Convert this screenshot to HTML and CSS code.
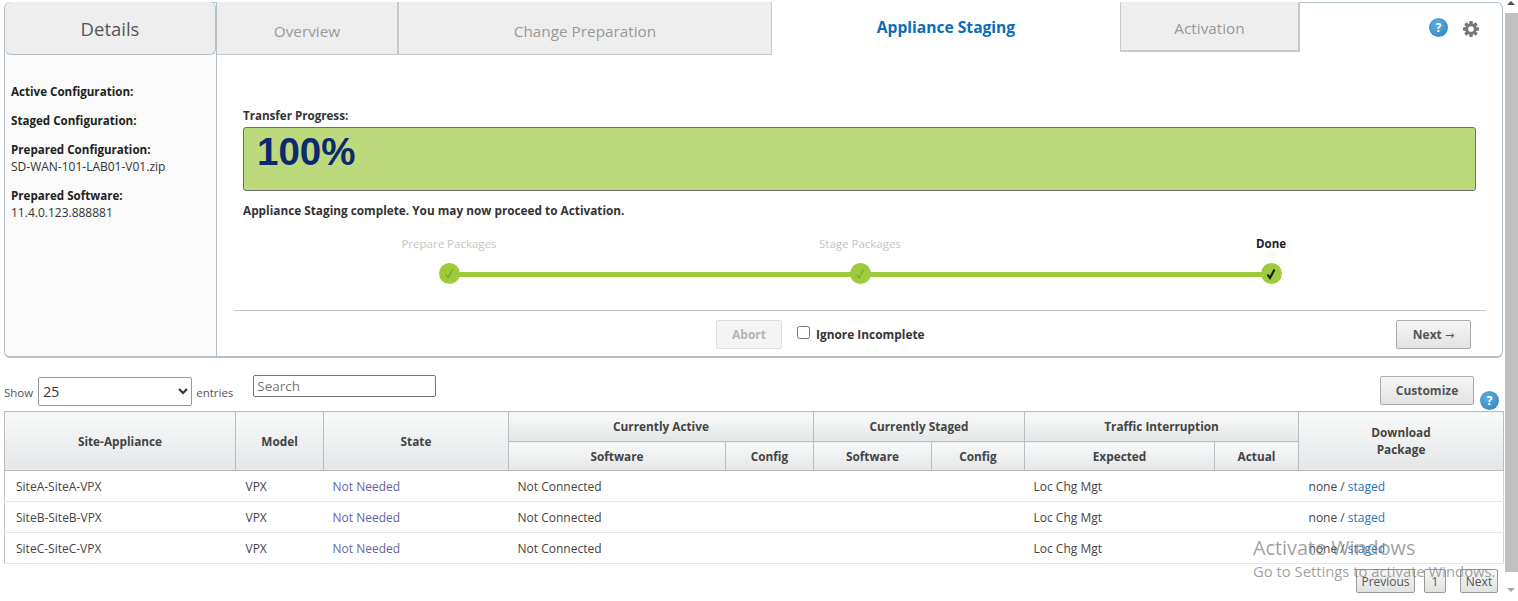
FILE: index.html
```html
<!DOCTYPE html>
<html lang="en">
<head>
    <meta charset="UTF-8">
    <title>Appliance Staging</title>
    <link rel="stylesheet" href="styles.css">
</head>
<body>
    <div class="page">
        <div class="panel">
            <aside class="side">
                <div class="side-title">Details</div>
                <div class="side-body">
                    <p class="side-item"><b>Active Configuration:</b></p>
                    <p class="side-item"><b>Staged Configuration:</b></p>
                    <p class="side-item"><b>Prepared Configuration:</b><br>SD-WAN-101-LAB01-V01.zip</p>
                    <p class="side-item"><b>Prepared Software:</b><br>11.4.0.123.888881</p>
                </div>
            </aside>
            <section class="content">
                <nav class="tabs">
                    <div class="tab tab-overview">Overview</div>
                    <div class="tab tab-change">Change Preparation</div>
                    <div class="tab tab-active">Appliance Staging</div>
                    <div class="tab tab-activation">Activation</div>
                    <div class="tab-icons">
                        <span class="help">?</span>
                        <svg class="gear" width="16" height="16" viewBox="0 0 18 18">
                            <g fill="#777">
                                <rect x="7" y="0" width="4" height="18" rx="1"/>
                                <rect x="7" y="0" width="4" height="18" rx="1" transform="rotate(45 9 9)"/>
                                <rect x="7" y="0" width="4" height="18" rx="1" transform="rotate(90 9 9)"/>
                                <rect x="7" y="0" width="4" height="18" rx="1" transform="rotate(135 9 9)"/>
                                <circle cx="9" cy="9" r="6.5"/>
                            </g>
                            <circle cx="9" cy="9" r="3.2" fill="#fff"/>
                        </svg>
                    </div>
                </nav>
                <div class="stage">
                    <div class="label">Transfer Progress:</div>
                    <div class="progress">100%</div>
                    <div class="message">Appliance Staging complete. You may now proceed to Activation.</div>
                    <div class="steps">
                        <div class="step">
                            <span class="step-name">Prepare Packages</span>
                            <span class="dot"><svg width="12" height="12" viewBox="0 0 12 12"><path d="M3 6.5 L5 10 L9.5 1.5" fill="none" stroke="#6f9a2c" stroke-width="1"/></svg></span>
                        </div>
                        <div class="step">
                            <span class="step-name">Stage Packages</span>
                            <span class="dot"><svg width="12" height="12" viewBox="0 0 12 12"><path d="M3 6.5 L5 10 L9.5 1.5" fill="none" stroke="#6f9a2c" stroke-width="1"/></svg></span>
                        </div>
                        <div class="step step-done">
                            <span class="step-name">Done</span>
                            <span class="dot"><svg width="12" height="12" viewBox="0 0 12 12"><path d="M2.5 6.5 L5 10 L9.5 1.5" fill="none" stroke="#111" stroke-width="2"/></svg></span>
                        </div>
                    </div>
                </div>
                <div class="actions">
                    <button class="btn btn-abort" type="button">Abort</button>
                    <label class="ignore"><input type="checkbox"> Ignore Incomplete</label>
                    <button class="btn btn-next" type="button">Next <span class="next-arrow">→</span></button>
                </div>
            </section>
        </div>

        <div class="toolbar">
            <span class="show">Show</span>
            <select class="entries"><option>25</option></select>
            <span class="show">entries</span>
            <input class="search" type="text" placeholder="Search">
            <button class="btn btn-customize" type="button">Customize</button>
            <span class="help help-low">?</span>
        </div>

        <table class="grid">
            <colgroup>
                <col class="c1"><col class="c2"><col class="c3"><col class="c4"><col class="c5">
                <col class="c6"><col class="c7"><col class="c8"><col class="c9"><col class="c10">
            </colgroup>
            <thead>
                <tr>
                    <th rowspan="2">Site-Appliance</th>
                    <th rowspan="2">Model</th>
                    <th rowspan="2">State</th>
                    <th colspan="2">Currently Active</th>
                    <th colspan="2">Currently Staged</th>
                    <th colspan="2">Traffic Interruption</th>
                    <th rowspan="2">Download<br>Package</th>
                </tr>
                <tr>
                    <th>Software</th>
                    <th>Config</th>
                    <th>Software</th>
                    <th>Config</th>
                    <th>Expected</th>
                    <th>Actual</th>
                </tr>
            </thead>
            <tbody>
                <tr>
                    <td>SiteA-SiteA-VPX</td><td>VPX</td><td class="state">Not Needed</td><td>Not Connected</td><td></td><td></td><td></td><td>Loc Chg Mgt</td><td></td>
                    <td>none / <a href="#">staged</a></td>
                </tr>
                <tr>
                    <td>SiteB-SiteB-VPX</td><td>VPX</td><td class="state">Not Needed</td><td>Not Connected</td><td></td><td></td><td></td><td>Loc Chg Mgt</td><td></td>
                    <td>none / <a href="#">staged</a></td>
                </tr>
                <tr>
                    <td>SiteC-SiteC-VPX</td><td>VPX</td><td class="state">Not Needed</td><td>Not Connected</td><td></td><td></td><td></td><td>Loc Chg Mgt</td><td></td>
                    <td>none / <a href="#">staged</a></td>
                </tr>
            </tbody>
        </table>

        <div class="pager">
            <button class="btn page-btn page-prev" type="button">Previous</button>
            <button class="btn page-btn page-one" type="button">1</button>
            <button class="btn page-btn page-next" type="button">Next</button>
        </div>
    </div>

    <div class="scrollbar">
        <span class="arrow-up"></span>
        <span class="thumb"></span>
        <span class="arrow-down"></span>
    </div>

    <div class="watermark">
        <div class="wm-big">Activate Windows</div>
        <div class="wm-small">Go to Settings to activate Windows.</div>
    </div>
</body>
</html>
```

FILE: styles.css
```css
* {
    box-sizing: border-box;
}

html, body {
    height: 601px;
    overflow: hidden;
}

body {
    margin: 0;
    display: flex;
    font-family: "Open Sans", "Noto Sans", sans-serif;
    font-size: 12px;
    color: #444;
    background-color: #fff;
}

.page {
    width: 1505px;
    padding: 2px 0 0 4px;
    flex: none;
}

.panel {
    width: 1499px;
    height: 356px;
    display: flex;
    border: 1px solid #b4c0c8;
    border-bottom-width: 2px;
    border-radius: 6px;
}

/* left column */
.side {
    width: 212px;
    flex: none;
    background-color: #fafafa;
    border-right: 1px solid #b4c0c8;
    border-radius: 6px 0 0 6px;
}

.side-title {
    height: 53px;
    line-height: 54px;
    text-align: center;
    font-size: 18.5px;
    color: #555;
    background-color: #eee;
    border-bottom: 1px solid #b4c0c8;
    border-right: 1px solid #b4c0c8;
    border-radius: 6px;
    margin-top: -1px;
}

.side-body {
    padding: 28px 0 0 6px;
}

.side-item {
    margin: 0 0 12px;
    line-height: 17px;
    font-size: 12px;
    color: #333;
}

.side-item b {
    font-weight: 700;
    font-size: 11.6px;
    color: #222;
}

/* tabs */
.content {
    flex: 1;
    min-width: 0;
}

.tabs {
    display: flex;
    height: 53px;
    margin-top: -1px;
}

.tab {
    flex: none;
    text-align: center;
    font-size: 15.3px;
    color: #999;
    background-color: #eee;
    border-right: 2px solid #c8c8c8;
    border-bottom: 1px solid #c8c8c8;
    height: 53px;
    line-height: 59px;
}

.tab-overview {
    width: 182px;
}

.tab-change {
    width: 373px;
    border-right-width: 1px;
}

.tab-active {
    width: 348px;
    font-size: 15.6px;
    font-weight: 700;
    color: #0b6db5;
    background-color: #fff;
    border: 0;
    line-height: 50px;
}

.tab-activation {
    width: 180px;
    height: 50px;
    line-height: 52px;
    border-left: 1px solid #c8c8c8;
    border-bottom-width: 2px;
}

.tab-icons {
    margin-left: auto;
    padding: 16px 23px 0 0;
    display: flex;
    gap: 15px;
    align-items: flex-start;
}

.help {
    width: 19px;
    height: 19px;
    flex: none;
    display: block;
    border-radius: 50%;
    background: radial-gradient(circle at 40% 35%, #62aee0, #2a7fb8);
    color: #fff;
    font-size: 12px;
    font-weight: 700;
    line-height: 19px;
    text-align: center;
}

.gear {
    margin-top: 3px;
}

/* staging body */
.stage {
    padding: 53px 26px 0 26px;
}

.label {
    font-size: 11.6px;
    font-weight: 700;
    line-height: 16px;
    color: #333;
}

.progress {
    margin-top: 3px;
    height: 64px;
    padding: 0 13px;
    background-color: #bcd97c;
    border: 1px solid #707070;
    border-radius: 3px;
    font-family: "Liberation Sans", Arial, sans-serif;
    font-size: 38.5px;
    font-weight: 700;
    line-height: 48px;
    color: #0b2a70;
}

.message {
    margin-top: 11px;
    font-size: 11.8px;
    font-weight: 700;
    line-height: 16px;
    color: #333;
}

.steps {
    position: relative;
    width: 942px;
    margin: 18px 0 0 146px;
    display: flex;
    justify-content: space-between;
}

.steps::before {
    content: "";
    position: absolute;
    left: 60px;
    right: 60px;
    top: 36px;
    height: 5px;
    background-color: #9dcb3b;
}

.step {
    position: relative;
    width: 120px;
    display: flex;
    flex-direction: column;
    align-items: center;
    gap: 11px;
}

.step-name {
    line-height: 16px;
    font-size: 11.5px;
    color: #c4c4c4;
}

.step-done .step-name {
    font-weight: 700;
    color: #222;
}

.dot {
    width: 21px;
    height: 21px;
    border-radius: 50%;
    background-color: #9dcb3b;
    display: flex;
    align-items: center;
    justify-content: center;
}

/* buttons row */
.actions {
    margin: 26px 16px 0 17px;
    padding-top: 9px;
    border-top: 1px solid #c4c4c4;
    display: flex;
    align-items: flex-start;
}

.btn {
    font-family: inherit;
    font-size: 12px;
    font-weight: 700;
    color: #555;
    background: linear-gradient(#f6f6f6, #e2e2e2);
    border: 1px solid #aaa;
    border-radius: 2px;
    padding: 0;
}

.btn-abort {
    width: 66px;
    height: 29px;
    margin-left: 482px;
    color: #b5b5b5;
    background: #f4f4f4;
    border-color: #ddd;
}

.ignore {
    margin-left: 15px;
    line-height: 29px;
    font-weight: 700;
    font-size: 11.9px;
    color: #333;
    display: flex;
    align-items: center;
    gap: 6px;
}

.ignore input {
    margin: -4px 0 0;
    width: 13px;
    height: 13px;
}

.btn-next {
    width: 75px;
    height: 29px;
    margin-left: auto;
    margin-right: 15px;
}

.next-arrow {
    font-family: "DejaVu Sans", sans-serif;
    font-size: 11px;
    font-weight: 400;
}

/* table toolbar */
.toolbar {
    width: 1499px;
    height: 53px;
    padding-top: 17px;
    display: flex;
    align-items: flex-start;
}

.show {
    line-height: 29px;
    margin-top: 3px;
    font-size: 11.5px;
    color: #555;
}

.entries {
    width: 154px;
    height: 29px;
    margin: 2px 4px 0 5px;
    padding-left: 0;
    font-family: inherit;
    font-size: 14px;
    color: #333;
    background-color: #fff;
    border: 1px solid #999;
    border-radius: 2px;
}

.search {
    width: 183px;
    height: 22px;
    margin-left: 20px;
    padding: 0 3px;
    font-family: inherit;
    font-size: 13.5px;
    border: 1px solid #777;
    border-radius: 2px;
}

.search::placeholder {
    color: #777;
}

.btn-customize {
    width: 94px;
    height: 29px;
    margin-top: 1px;
    margin-left: auto;
    margin-right: 6px;
}

.help-low {
    margin: 16px 4px 0 0;
}

/* data table */
.grid {
    width: 1499px;
    table-layout: fixed;
    border-collapse: collapse;
}

.c1 { width: 231px; }
.c2 { width: 88px; }
.c3 { width: 185px; }
.c4 { width: 217px; }
.c5 { width: 88px; }
.c6 { width: 118px; }
.c7 { width: 93px; }
.c8 { width: 190px; }
.c9 { width: 84px; }
.c10 { width: 205px; }

.grid th {
    height: 30px;
    padding: 0;
    font-size: 11.8px;
    font-weight: 700;
    line-height: 17px;
    color: #444;
    background: linear-gradient(#f8f9f9, #e5e6e8);
    border: 1px solid #babdbf;
}

.grid thead tr + tr th {
    height: 29px;
}

.grid td {
    height: 31px;
    padding: 0 9px;
    font-size: 12px;
    color: #444;
    white-space: nowrap;
    border-bottom: 1px solid #e6e6e6;
}

.grid td:first-child {
    padding-left: 11px;
    border-left: 1px solid #c4c4c4;
}

.grid td:nth-child(2),
.grid td:last-child {
    padding-left: 10px;
}

.grid td:last-child {
    border-right: 1px solid #d4d4d4;
}

.grid .state {
    color: #6464a4;
}

.grid a {
    color: #1f74b8;
    text-decoration: none;
}

/* pagination */
.pager {
    width: 1494px;
    margin-top: 5px;
    display: flex;
    justify-content: flex-end;
}

.page-btn {
    height: 24px;
    font-weight: 400;
    color: #555;
    border-color: #999;
}

.page-prev {
    width: 59px;
}

.page-one {
    width: 22px;
    margin-left: 9px;
}

.page-next {
    width: 38px;
    margin-left: 14px;
}

/* browser scrollbar */
.scrollbar {
    width: 13px;
    flex: none;
    height: 601px;
    display: flex;
    flex-direction: column;
    align-items: stretch;
}

.arrow-up,
.arrow-down {
    height: 13px;
    flex: none;
    position: relative;
}

.arrow-up::after,
.arrow-down::after {
    content: "";
    position: absolute;
    left: 2px;
    border-left: 4px solid transparent;
    border-right: 4px solid transparent;
}

.arrow-up::after {
    top: 1px;
    border-bottom: 4px solid #505050;
}

.arrow-down::after {
    bottom: 9px;
    border-top: 4px solid #a8a8a8;
}

.thumb {
    flex: 1;
    margin-bottom: 16px;
    background-color: #c0c0c0;
}

/* windows activation notice over the page */
.watermark {
    position: absolute;
    left: 1253px;
    top: 534px;
    color: rgba(130, 130, 130, 0.75);
    white-space: nowrap;
    pointer-events: none;
}

.wm-big {
    font-size: 19.8px;
    line-height: 27px;
}

.wm-small {
    font-size: 14.8px;
    line-height: 20px;
}
```
